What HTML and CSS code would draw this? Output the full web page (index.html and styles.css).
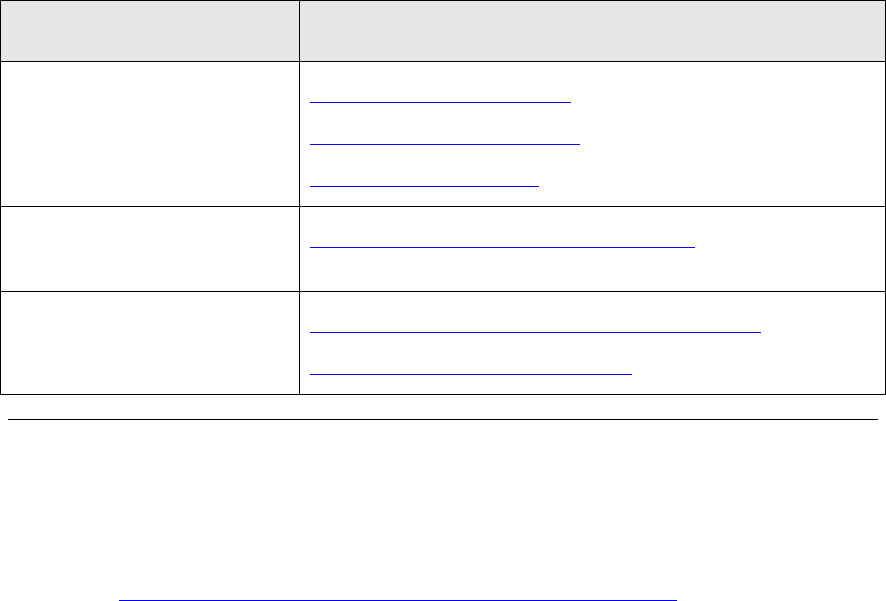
FILE: index.html
```html
<!DOCTYPE html>
<html lang="en">
<head>
<meta charset="utf-8">
<title>Links</title>
<link rel="stylesheet" href="styles.css">
</head>
<body>
<table class="grid">
  <colgroup>
    <col class="col-a">
    <col class="col-b">
  </colgroup>
  <thead>
    <tr>
      <th></th>
      <th></th>
    </tr>
  </thead>
  <tbody>
    <tr>
      <td></td>
      <td class="links">
        <a class="line w1" href="#">Documentation overview</a>
        <a class="line w2" href="#">Getting started guide</a>
        <a class="line w3" href="#">Release notes</a>
      </td>
    </tr>
    <tr>
      <td></td>
      <td class="links tall">
        <a class="line w4" href="#">Frequently asked questions and answers</a>
      </td>
    </tr>
    <tr>
      <td></td>
      <td class="links">
        <a class="line w5" href="#">Support knowledge base and community forums</a>
        <a class="line w6" href="#">Contact technical support</a>
      </td>
    </tr>
  </tbody>
</table>
<hr class="rule">
<div class="footer">
  <a class="line w7" href="#">Return to the main table of contents for this documentation</a>
</div>
</body>
</html>
```
FILE: styles.css
```css
html, body {
  margin: 0;
  padding: 0;
  background: #ffffff;
  font-family: "Liberation Sans", Arial, sans-serif;
  font-size: 13px;
}

.grid {
  border-collapse: collapse;
  table-layout: fixed;
  width: 885px;
}

.col-a { width: 299px; }
.col-b { width: 586px; }

.grid th,
.grid td {
  border: 1px solid #000000;
  padding: 0;
  vertical-align: top;
}

.grid th {
  background: #e6e6e6;
  height: 60px;
}

.grid td.links {
  padding: 0 0 19px 10px;
}

.grid td.links.tall {
  padding-bottom: 43px;
}

.line {
  display: block;
  height: 20px;
  line-height: 20px;
  margin-top: 21px;
  color: transparent;
  text-decoration: none;
  white-space: nowrap;
  overflow: hidden;
  border-bottom: 1px solid #0000ff;
}

.links .line:first-child {
  margin-top: 20px;
}

.w1 { width: 261px; }
.w2 { width: 270px; }
.w3 { width: 229px; }
.w4 { width: 385px; }
.w5 { width: 451px; }
.w6 { width: 322px; }
.w7 { width: 558px; }

.rule {
  border: 0;
  border-top: 1px solid #000000;
  height: 0;
  margin: 24px 8px 0 8px;
}

.footer {
  padding: 160px 0 0 119px;
}

.footer .line {
  margin-top: 0;
}
```
